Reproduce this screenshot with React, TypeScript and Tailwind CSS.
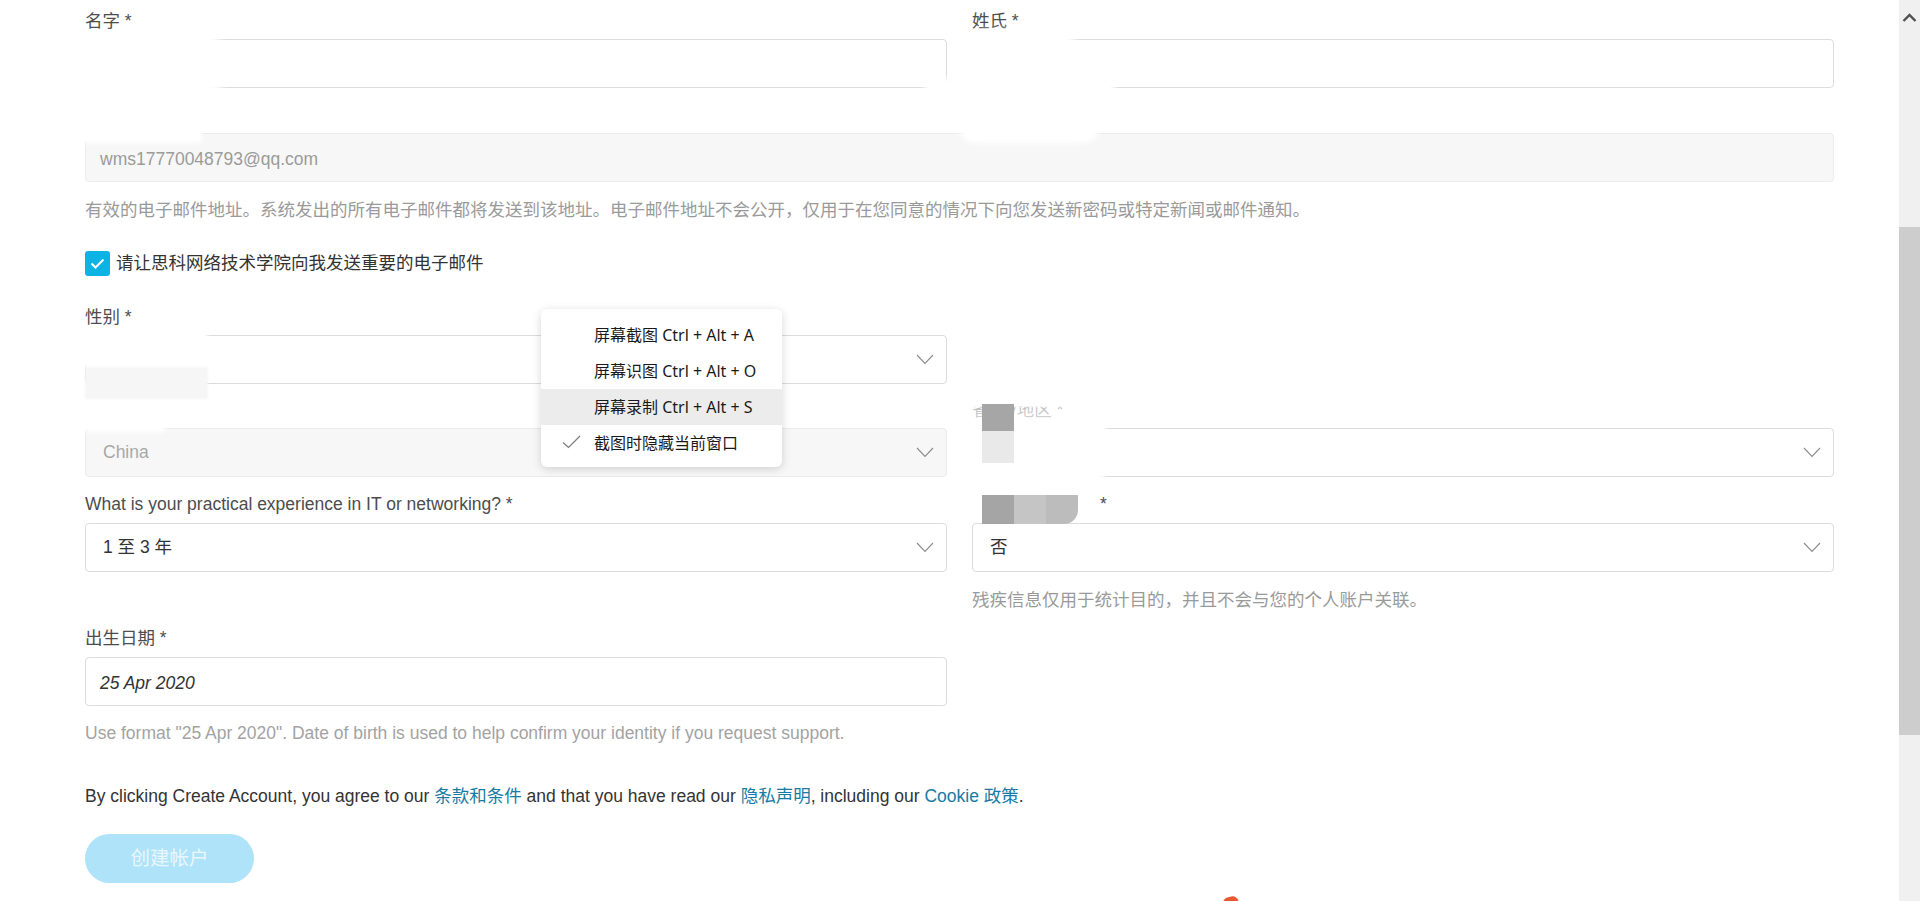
import React from 'react';

const Chevron = () => (
  <svg width="18" height="11" viewBox="0 0 18 11" className="shrink-0">
    <polyline points="1,1 9,9.5 17,1" fill="none" stroke="#8c8c8c" strokeWidth="1.1" />
  </svg>
);

function Label({ children, tight }: { children?: React.ReactNode; tight?: boolean }) {
  return (
    <div className={tight ? 'h-[24px] leading-[24px] mb-[7px] text-[17.5px] text-[#4d4d4d] whitespace-nowrap' : 'h-[24px] leading-[24px] mb-[6px] text-[17.5px] text-[#4d4d4d] whitespace-nowrap'}>
      {children}
    </div>
  );
}

function Select({ value, disabled }: { value?: string; disabled?: boolean }) {
  return (
    <div
      className={
        disabled
          ? 'h-[49px] rounded-[4px] border border-[#ebebeb] bg-[#f7f7f7] flex items-center justify-between pl-[17px] pr-[12px] text-[17.5px] text-[#a8a8a8]'
          : 'h-[49px] rounded-[4px] border border-[#dcdcdc] bg-white flex items-center justify-between pl-[17px] pr-[12px] text-[17.5px] text-[#333]'
      }
    >
      <span>{value}</span>
      <Chevron />
    </div>
  );
}

function Input({ children, italic }: { children?: React.ReactNode; italic?: boolean }) {
  return (
    <div
      className={
        italic
          ? 'h-[49px] rounded-[4px] border border-[#dcdcdc] bg-white flex items-center pl-[14px] pt-[4px] text-[17.5px] text-[#333] italic'
          : 'h-[49px] rounded-[4px] border border-[#dcdcdc] bg-white flex items-center pl-[14px] pt-[4px] text-[17.5px] text-[#333]'
      }
    >
      {children}
    </div>
  );
}

function Scrollbar() {
  return (
    <div className="w-[21px] h-full bg-[#f0f0f0] flex flex-col shrink-0">
      <div className="h-[36px] flex items-center justify-center">
        <svg width="15" height="10" viewBox="0 0 15 10">
          <polyline points="1.5,8 7.5,2 13.5,8" fill="none" stroke="#505050" strokeWidth="2.4" />
        </svg>
      </div>
      <div className="h-[191px]" />
      <div className="h-[508px] bg-[#cdcdcd]" />
    </div>
  );
}

function Menu() {
  return (
    <div className="absolute left-[541px] top-[309px] w-[241px] bg-white rounded-[6px] shadow-[0_2px_10px_rgba(0,0,0,0.16)] pt-[8px] pb-[6px] font-['Noto_Sans','Noto_Sans_CJK_SC',sans-serif] text-[16px] text-[#1a1a1a]">
      <div className="h-[36px] flex items-center pl-[53px]">屏幕截图 Ctrl + Alt + A</div>
      <div className="h-[36px] flex items-center pl-[53px]">屏幕识图 Ctrl + Alt + O</div>
      <div className="h-[36px] flex items-center pl-[53px] bg-[#ececec]">屏幕录制 Ctrl + Alt + S</div>
      <div className="h-[36px] flex items-center pl-[53px] relative">
        <svg width="19" height="14" viewBox="0 0 19 14" className="absolute left-[21px] top-[10px]">
          <polyline points="1,7.5 6.5,12.5 18,1" fill="none" stroke="#7a7a7a" strokeWidth="1.2" />
        </svg>
        截图时隐藏当前窗口
      </div>
    </div>
  );
}

export default function App() {
  return (
    <div className="w-[1920px] h-[901px] overflow-hidden flex bg-white font-['Liberation_Sans','Noto_Sans_CJK_SC',sans-serif]">
      <div className="relative flex-1 h-full">
        <div className="pl-[85px] pt-[9px] w-[1834px]">
          {/* name row */}
          <div className="grid grid-cols-[862px_862px] gap-x-[25px]">
            <div>
              <Label>名字 *</Label>
              <Input />
            </div>
            <div>
              <Label>姓氏 *</Label>
              <Input />
            </div>
          </div>

          {/* email */}
          <div className="mt-[15px]">
            <div className="h-[24px] mb-[6px]" />
            <div className="h-[49px] rounded-[4px] border border-[#ececec] bg-[#f7f7f7] flex items-center pl-[14px] pt-[4px] text-[17.5px] text-[#9b9b9b]">
              wms17770048793@qq.com
            </div>
          </div>
          <p className="mt-[16px] h-[24px] leading-[24px] text-[17.5px] text-[#9a9a9a] whitespace-nowrap">
            有效的电子邮件地址。系统发出的所有电子邮件都将发送到该地址。电子邮件地址不会公开，仅用于在您同意的情况下向您发送新密码或特定新闻或邮件通知。
          </p>

          {/* checkbox */}
          <div className="mt-[29px] h-[25px] flex items-center gap-[6px]">
            <div className="w-[25px] h-[25px] rounded-[3px] bg-[#0db3e5] flex items-center justify-center">
              <svg width="15" height="11" viewBox="0 0 15 11">
                <polyline points="1.5,5.5 5.5,9.5 13.5,1.5" fill="none" stroke="#fff" strokeWidth="2" />
              </svg>
            </div>
            <span className="text-[17.5px] text-[#333]">请让思科网络技术学院向我发送重要的电子邮件</span>
          </div>

          {/* gender */}
          <div className="mt-[29px] grid grid-cols-[862px_862px] gap-x-[25px]">
            <div>
              <Label>性别 *</Label>
              <Select />
            </div>
            <div />
          </div>

          {/* country / state */}
          <div className="mt-[14px] grid grid-cols-[862px_862px] gap-x-[25px]">
            <div>
              <div className="h-[24px] mb-[6px]" />
              <Select value="China" disabled />
            </div>
            <div>
              <Label>省/州/地区 *</Label>
              <Select />
            </div>
          </div>

          {/* experience / disability */}
          <div className="mt-[15px] grid grid-cols-[862px_862px] gap-x-[25px]">
            <div>
              <Label tight>What is your practical experience in IT or networking? *</Label>
              <Select value="1 至 3 年" />
            </div>
            <div>
              <Label tight>
                <span className="inline-block w-[128px]" />*
              </Label>
              <Select value="否" />
              <p className="mt-[16px] h-[24px] leading-[24px] text-[17.5px] text-[#9a9a9a] whitespace-nowrap">
                残疾信息仅用于统计目的，并且不会与您的个人账户关联。
              </p>
            </div>
          </div>

          {/* DOB */}
          <div className="mt-[14px] w-[862px]">
            <Label tight>出生日期 *</Label>
            <Input italic>25 Apr 2020</Input>
          </div>
          <p className="mt-[15px] h-[24px] leading-[24px] text-[17.5px] text-[#a3a3a3] whitespace-nowrap">
            Use format "25 Apr 2020". Date of birth is used to help confirm your identity if you request support.
          </p>

          <p className="mt-[39px] h-[24px] leading-[24px] text-[17.5px] text-[#333] whitespace-nowrap">
            By clicking Create Account, you agree to our <span className="text-[#177ba3]">条款和条件</span> and that you have read our{' '}
            <span className="text-[#177ba3]">隐私声明</span>, including our <span className="text-[#177ba3]">Cookie 政策</span>.
          </p>

          <button className="mt-[26px] w-[169px] h-[49px] rounded-full bg-[#aee3f9] text-[19.5px] text-[#e9f7fd] flex items-center justify-center">
            创建帐户
          </button>
        </div>

        {/* redaction smudges */}
        <div className="absolute left-[70px] top-[33px] w-[160px] h-[62px] bg-white rounded-[28px] blur-[3px]" />
        <div className="absolute left-[958px] top-[30px] w-[125px] h-[90px] bg-white rounded-[30px] blur-[3px]" />
        <div className="absolute left-[924px] top-[78px] w-[60px] h-[26px] bg-white rounded-[12px] blur-[3px]" />
        <div className="absolute left-[1040px] top-[60px] w-[75px] h-[50px] bg-white rounded-[20px] blur-[3px]" />
        <div className="absolute left-[960px] top-[100px] w-[138px] h-[43px] bg-white rounded-[14px] blur-[3px]" />
        <div className="absolute left-[82px] top-[127px] w-[120px] h-[16px] bg-white blur-[2px]" />
        <div className="absolute left-[76px] top-[328px] w-[132px] h-[39px] bg-white rounded-[10px] blur-[2px]" />
        <div className="absolute left-[85px] top-[367px] w-[123px] h-[32px] bg-[#f6f6f6] blur-[1px]" />
        <div className="absolute left-[85px] top-[423px] w-[80px] h-[9px] bg-white blur-[2px]" />
        <div className="absolute left-[966px] top-[396px] w-[110px] h-[12px] bg-white blur-[1px]" />
        <div className="absolute left-[966px] top-[408px] w-[100px] h-[12px] bg-white/70 blur-[1px]" />
        <div className="absolute left-[966px] top-[419px] w-[140px] h-[64px] bg-white rounded-[12px] blur-[2px]" />
        <div className="absolute left-[982px] top-[404px] w-[32px] h-[27px] bg-[#a6a6a6]" />
        <div className="absolute left-[982px] top-[431px] w-[32px] h-[32px] bg-[#e9e9e9]" />
        <div className="absolute left-[982px] top-[495px] flex h-[29px]">
          <div className="w-[32px] h-full bg-[#a5a5a5]" />
          <div className="w-[32px] h-full bg-[#c5c5c5]" />
          <div className="w-[32px] h-full bg-[#bcbcbc] rounded-br-[14px]" />
        </div>

        {/* small orange mark */}
        <div className="absolute left-[1222px] top-[897px] w-[16px] h-[6px] bg-[#e55a33] rounded-t-full -rotate-[15deg]" />

        <Menu />
      </div>
      <Scrollbar />
    </div>
  );
}
